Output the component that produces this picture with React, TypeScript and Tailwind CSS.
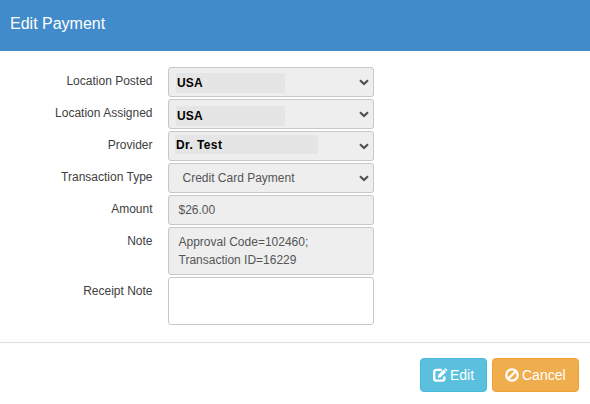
import type { ReactNode } from 'react';

const selects = [
  { label: 'Location Posted', value: 'USA', patch: 'w-[109px] h-5 mt-[5px] ml-[7px] pl-px tracking-[0.2px]' },
  { label: 'Location Assigned', value: 'USA', patch: 'w-[109px] h-5 mt-[6px] ml-[7px] pl-px tracking-[0.2px]' },
  { label: 'Provider', value: 'Dr. Test', patch: 'w-[143px] h-[19px] mt-[3px] ml-[6px] pl-px tracking-[0.4px]' },
];

const boxClass = 'w-[206px] shrink-0 rounded-[3px] border border-[#c8c8c8] bg-[#eeeeee]';

function ChevronIcon() {
  return (
    <svg width="10" height="7" viewBox="0 0 10 7" fill="none" className="shrink-0 mt-[11px] mr-[4px]">
      <path d="M1 1.3 L5 5 L9 1.3" stroke="#505050" strokeWidth="2.2" />
    </svg>
  );
}

function EditIcon() {
  return (
    <svg width="15" height="14" viewBox="0 0 15 14" fill="none" className="shrink-0">
      <path
        d="M8.8 1.9H3.2A2 2 0 0 0 1.2 3.9V10.6A2 2 0 0 0 3.2 12.6H9.4A2 2 0 0 0 11.4 10.6V8.4"
        stroke="#fff"
        strokeWidth="2.4"
      />
      <path d="M4.6 10L5.6 6.6L10.7 1.5L13.1 3.9L8 9Z" fill="#fff" />
      <path d="M11.3 1L12 0.3Q12.4 0 12.8 0.4L14.3 1.9Q14.6 2.3 14.3 2.6L13.6 3.3Z" fill="#fff" />
    </svg>
  );
}

function BanIcon() {
  return (
    <svg width="14" height="14" viewBox="0 0 14 14" fill="none" className="shrink-0">
      <circle cx="7" cy="7" r="5.7" stroke="#fff" strokeWidth="2.3" />
      <path d="M3.2 10.8L10.8 3.2" stroke="#fff" strokeWidth="2.3" />
    </svg>
  );
}

function Row({ label, children }: { label: string; children: ReactNode }) {
  return (
    <div className="flex items-start">
      <label className="w-[152.5px] mr-[15.5px] pt-[5px] text-right leading-[18px] text-[#404040]">{label}</label>
      {children}
    </div>
  );
}

export default function App() {
  return (
    <div className="w-[590px] h-[404px] overflow-hidden bg-white text-[12px] [font-family:'Liberation_Sans',Arial,sans-serif]">
      <div className="h-[51px] bg-[#428bca] pl-[10px] pt-[13px]">
        <h4 className="text-[16px] leading-[22px] text-white">Edit Payment</h4>
      </div>

      <div className="flex h-[291px] flex-col gap-[2px] pt-4">
        {selects.map((item) => (
          <Row key={item.label} label={item.label}>
            <div className={`${boxClass} flex h-[30px] justify-between`}>
              <div className={`${item.patch} bg-[#e5e5e5] font-bold leading-5 text-black`}>{item.value}</div>
              <ChevronIcon />
            </div>
          </Row>
        ))}
        <Row label="Transaction Type">
          <div className={`${boxClass} flex h-[30px] justify-between`}>
            <span className="pl-[13.5px] leading-[28px] text-[#555]">Credit Card Payment</span>
            <ChevronIcon />
          </div>
        </Row>
        <Row label="Amount">
          <div className={`${boxClass} h-[30px] pl-[9.5px] leading-[28px] text-[#555]`}>$26.00</div>
        </Row>
        <Row label="Note">
          <div className={`${boxClass} h-[48px] pl-[9.5px] pt-[5px] leading-[18px] text-[#555]`}>
            Approval Code=102460;
            <br />
            Transaction ID=16229
          </div>
        </Row>
        <Row label="Receipt Note">
          <textarea className="block h-[48px] w-[206px] resize-none rounded-[3px] border border-[#c8c8c8] bg-white px-[10px] py-[5px] outline-none" />
        </Row>
      </div>

      {/* Footer buttons */}
      <div className="flex justify-end gap-[5px] border-t border-[#e0e0e0] pr-[11px] pt-[15px] text-[14px] text-white">
        <button className="flex h-[34px] w-[67px] items-center gap-[2px] rounded-[4px] border border-[#46b8da] bg-[#5bc0de] pl-[12px]">
          <EditIcon />
          Edit
        </button>
        <button className="flex h-[34px] w-[87px] items-center gap-[3px] rounded-[4px] border border-[#eea236] bg-[#f0ad4e] pl-[12px]">
          <BanIcon />
          Cancel
        </button>
      </div>
    </div>
  );
}
